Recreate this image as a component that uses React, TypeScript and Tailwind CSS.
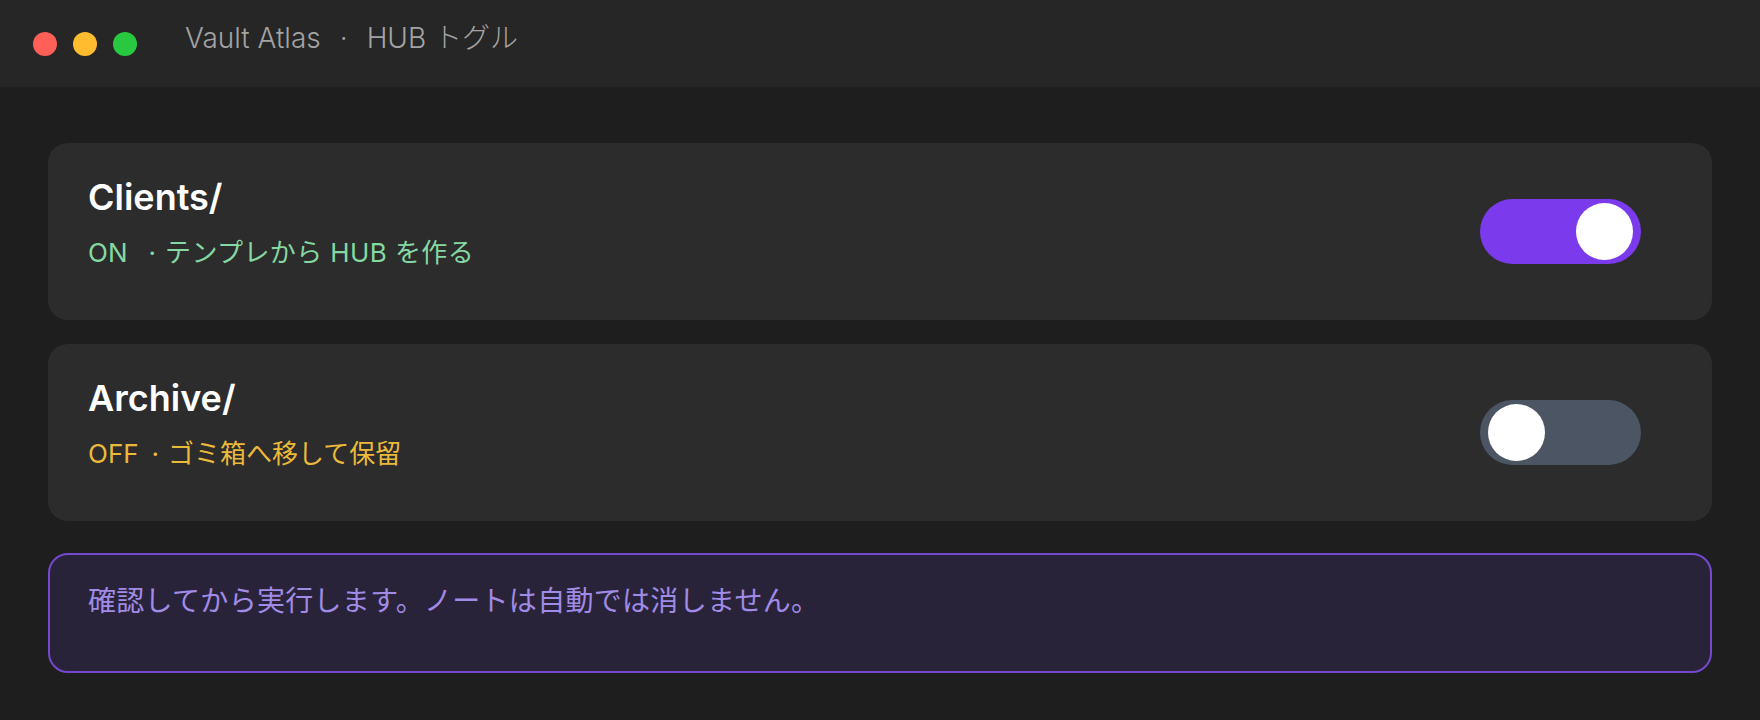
import React from "react";

const FONT = `Inter, "Noto Sans CJK JP", sans-serif`;

type Hub = {
  name: string;
  on: boolean;
  desc: string;
};

const hubs: Hub[] = [
  { name: "Clients/", on: true, desc: "テンプレから HUB を作る" },
  { name: "Archive/", on: false, desc: "ゴミ箱へ移して保留" },
];

function Toggle({ on }: { on: boolean }) {
  return (
    <div
      role="switch"
      aria-checked={on}
      className={`flex h-[65px] w-[161px] shrink-0 items-center rounded-full px-[8px] ${
        on ? "justify-end bg-[#7c3aed]" : "justify-start bg-[#4b5563]"
      }`}
    >
      <span className="h-[57px] w-[57px] rounded-full bg-white" />
    </div>
  );
}

function HubCard({ hub }: { hub: Hub }) {
  return (
    <div className="flex items-center justify-between rounded-[20px] bg-[#2c2c2c] pl-10 pr-[71px]">
      <div className="pt-[34px] pb-[49px]">
        <div className="text-[36px] leading-[40px] font-semibold text-white">{hub.name}</div>
        <div
          className={`mt-[18px] flex text-[26px] leading-[36px] ${
            hub.on ? "text-[#84d9a2]" : "text-[#ebba3a]"
          }`}
        >
          <span>{hub.on ? "ON" : "OFF"}</span>
          {/* ON gets a little extra room before the dot */}
          <span className={hub.on ? "ml-[21px] mr-[9px]" : "ml-[13px] mr-[9px]"}>·</span>
          <span className={hub.on ? "tracking-[0.4px]" : ""}>{hub.desc}</span>
        </div>
      </div>
      <Toggle on={hub.on} />
    </div>
  );
}

export default function App() {
  return (
    <div className="min-h-[720px] w-full bg-[#1e1e1e]" style={{ fontFamily: FONT }}>
      {/* Title bar */}
      <div className="flex h-[88px] items-center border-b border-[#1f1f1f] bg-[#262626] pl-[33px]">
        <div className="flex items-center gap-4">
          <span className="h-6 w-6 rounded-full bg-[#fe5f57]" />
          <span className="h-6 w-6 rounded-full bg-[#febc2e]" />
          <span className="h-6 w-6 rounded-full bg-[#28c840]" />
        </div>
        <div className="mb-[12px] ml-12 text-[28px] leading-[32px] font-light text-[#a3a3a3]">
          Vault Atlas<span className="mx-[19px]">·</span>HUB トグル
        </div>
      </div>

      {/* Content */}
      <div className="flex flex-col px-12 pt-[55px]">
        <div className="flex flex-col gap-6">
          {hubs.map((h) => (
            <HubCard key={h.name} hub={h} />
          ))}
        </div>

        <div className="mt-8 h-[120px] rounded-[20px] border-2 border-[#7449cf] bg-[#29233a] pt-[26px] pl-[38px]">
          <p className="text-[28px] leading-[40px] tracking-[0.3px] text-[#a08be6]">
            確認してから実行します。ノートは自動では消しません。
          </p>
        </div>
      </div>
    </div>
  );
}
